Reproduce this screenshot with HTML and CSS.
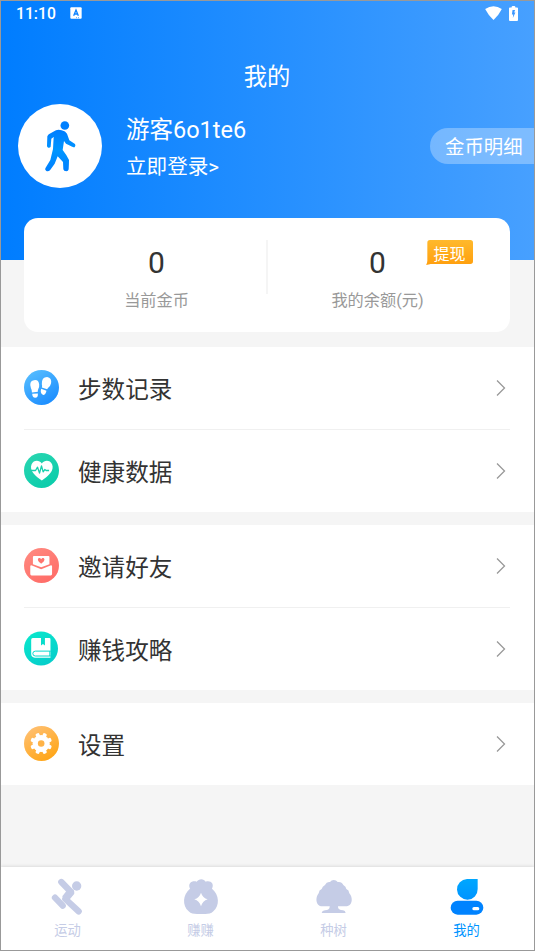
FILE: index.html
```html
<!DOCTYPE html>
<html lang="zh-CN">
<head>
<meta charset="UTF-8">
<meta name="viewport" content="width=device-width, initial-scale=1.0">
<title>我的</title>
<link rel="stylesheet" href="styles.css">
</head>
<body>

<div class="page">
  <header class="header">
    <div class="status-bar">
      <span class="time">11:10</span>
      <svg class="status-app" viewBox="0 0 36 36">
        <rect x="1" y="1" width="34" height="34" rx="3" fill="#fff"/>
        <path d="M11 26 L18 9 L25 26 M13.500 21 H22.500" fill="none" stroke="#0c82ff" stroke-width="4"/>
        <path d="M18 32 H28" stroke="#0c82ff" stroke-width="2" stroke-dasharray="3 3"/>
      </svg>
      <svg class="status-wifi" viewBox="0 0 50 42">
        <path d="M0 9 Q25 -7 50 9 Q40 29 25 42 Q10 29 0 9Z" fill="#fff"/>
      </svg>
      <svg class="status-battery" viewBox="0 0 28 46">
        <path d="M8 4 Q8 0 12 0 H16 Q20 0 20 4 H25 Q28 4 28 7 V43 Q28 46 25 46 H3 Q0 46 0 43 V7 Q0 4 3 4Z" fill="#fff"/>
        <path d="M11 12 H19 L16 20 H20 L12 37 L13 26 H9Z" fill="#3d98ff"/>
      </svg>
    </div>

    <h1 class="title">我的</h1>

    <div class="user">
      <svg class="avatar" viewBox="0 0 252 252">
        <defs>
          <linearGradient id="walkFill" x1="0" y1="0" x2="0" y2="1">
            <stop offset="0" stop-color="#007dff"/>
            <stop offset="0.500" stop-color="#0096ff"/>
            <stop offset="1" stop-color="#007fff"/>
          </linearGradient>
        </defs>
        <circle cx="126" cy="126" r="126" fill="#fff"/>
        <circle cx="140.500" cy="64.500" r="13" fill="#0080ff"/>
        <path d="M114 79 Q121 76 131 79 Q143 82 147 89 L154 109 L171 120 Q174 124 170 130 Q165 130 144 119 L138 111 L134 138 Q146 153 153 168 Q153 181 152 196 Q151 202 145 202 Q137 202 136 196 L135 174 L119 157 L110 179 L96 199 Q91 203 85 201 Q80 198 82 193 L97 168 L105 135 L107 99 L100 104 L98 128 Q96 132 91 131 Q87 130 87 126 L88 97 Q90 91 95 89Z" fill="url(#walkFill)"/>
      </svg>
      <div class="user-text">
        <div class="user-name">游客6o1te6</div>
        <div class="user-login">立即登录&gt;</div>
      </div>
      <div class="coin-detail">金币明细</div>
    </div>
  </header>

  <section class="wallet">
    <div class="wallet-item">
      <div class="wallet-num">0</div>
      <div class="wallet-label">当前金币</div>
    </div>
    <div class="wallet-line"></div>
    <div class="wallet-item">
      <div class="wallet-num">0</div>
      <div class="wallet-label">我的余额(元)</div>
    </div>
    <div class="withdraw">
      <svg class="withdraw-bg" viewBox="0 0 141 75">
        <defs>
          <linearGradient id="withdrawFill" x1="0" y1="0" x2="0" y2="1">
            <stop offset="0" stop-color="#ffb92c"/>
            <stop offset="1" stop-color="#ff9f0e"/>
          </linearGradient>
        </defs>
        <path d="M4 8 Q4 0 12 0 H133 Q141 0 141 8 V64 Q141 72 133 72 H14 L0 75 Q4 69 4 62Z" fill="url(#withdrawFill)"/>
      </svg>
      <span class="withdraw-text">提现</span>
    </div>
  </section>

  <main class="menu">
    <div class="group">
      <div class="row">
        <svg class="row-icon" viewBox="0 0 106 106">
          <defs>
            <linearGradient id="stepFill" x1="0.200" y1="0" x2="0.800" y2="1">
              <stop offset="0" stop-color="#56bdff"/>
              <stop offset="1" stop-color="#198bff"/>
            </linearGradient>
          </defs>
          <circle cx="53" cy="53" r="53" fill="url(#stepFill)"/>
          <g fill="#fff">
            <path d="M30 31 Q44 28 46 44 Q47 52 43 58 Q41 63 42 66 L24 68 Q25 62 21 55 Q14 34 30 31Z"/>
            <path d="M25 72 L42 71 Q43 84 34 84 Q25 84 25 72Z"/>
            <path d="M70 21 Q85 24 82 40 Q80 49 74 53 Q71 56 70 58 L54 53 Q56 49 54 43 Q53 21 70 21Z"/>
            <path d="M52 57 L68 63 Q65 78 57 75 Q48 71 52 57Z"/>
          </g>
        </svg>
        <span class="row-text">步数记录</span>
        <svg class="arrow" viewBox="0 0 10 18"><path d="M1 1.500 L8.500 9 L1 16.500"/></svg>
      </div>
      <div class="row">
        <svg class="row-icon" viewBox="0 0 106 106">
          <defs>
            <linearGradient id="healthFill" x1="0.200" y1="0" x2="0.800" y2="1">
              <stop offset="0" stop-color="#28d5b0"/>
              <stop offset="1" stop-color="#09ccab"/>
            </linearGradient>
          </defs>
          <circle cx="53" cy="53" r="53" fill="url(#healthFill)"/>
          <path d="M54 32 C62 20 79 21 85 34 C93 53 74 70 54 83 C34 70 15 53 23 34 C29 21 46 20 54 32Z" fill="#fff"/>
          <path d="M20 53 H35 L41 43 L47 61 L53 39 L58 57 L63 50 L67 53 H76" fill="none" stroke="#17d0ad" stroke-width="4" stroke-linejoin="round"/>
        </svg>
        <span class="row-text">健康数据</span>
        <svg class="arrow" viewBox="0 0 10 18"><path d="M1 1.500 L8.500 9 L1 16.500"/></svg>
      </div>
    </div>

    <div class="group">
      <div class="row">
        <svg class="row-icon" viewBox="0 0 106 106">
          <defs>
            <linearGradient id="inviteFill" x1="0.200" y1="0" x2="0.800" y2="1">
              <stop offset="0" stop-color="#ff8980"/>
              <stop offset="1" stop-color="#ff6b66"/>
            </linearGradient>
          </defs>
          <circle cx="53" cy="53" r="53" fill="url(#inviteFill)"/>
          <path d="M27 27 Q27 24 30 24 H74 Q77 24 77 27 V49 L52 58 L27 49Z" fill="#fff"/>
          <path d="M52 34 C55 28 62 29 62 35 C62 41 56 44 52 48 C48 44 42 41 42 35 C42 29 49 28 52 34Z" fill="#ff746d"/>
          <path d="M19 55 Q20 51 24 53 L52 64 L80 53 Q84 51 85 55 V79 Q85 83 81 83 H23 Q19 83 19 79Z" fill="#fff"/>
        </svg>
        <span class="row-text">邀请好友</span>
        <svg class="arrow" viewBox="0 0 10 18"><path d="M1 1.500 L8.500 9 L1 16.500"/></svg>
      </div>
      <div class="row">
        <svg class="row-icon row-icon-book" viewBox="0 0 104 106">
          <defs>
            <linearGradient id="bookFill" x1="0.200" y1="0" x2="0.800" y2="1">
              <stop offset="0" stop-color="#09e7cc"/>
              <stop offset="1" stop-color="#05cccb"/>
            </linearGradient>
          </defs>
          <circle cx="52" cy="53" r="52" fill="url(#bookFill)"/>
          <path d="M27 21 H52 V44 L58 39 L64 44 V21 H77 Q81 21 81 25 V81 H33 Q22 80 22 70 V26 Q22 21 27 21Z" fill="#fff"/>
          <path d="M82 61 H35 Q27 61 27 68.500 Q27 76 35 76 H82" fill="none" stroke="#06d8cc" stroke-width="3"/>
          <path d="M79 61 V76" stroke="#06d8cc" stroke-width="3"/>
        </svg>
        <span class="row-text">赚钱攻略</span>
        <svg class="arrow" viewBox="0 0 10 18"><path d="M1 1.500 L8.500 9 L1 16.500"/></svg>
      </div>
    </div>

    <div class="group">
      <div class="row">
        <svg class="row-icon" viewBox="0 0 106 106">
          <defs>
            <linearGradient id="settingFill" x1="0.200" y1="0" x2="0.800" y2="1">
              <stop offset="0" stop-color="#ffc073"/>
              <stop offset="1" stop-color="#ffa411"/>
            </linearGradient>
          </defs>
          <circle cx="53" cy="53" r="53" fill="url(#settingFill)"/>
          <g fill="#fff" transform="translate(52 53)">
            <circle r="26"/>
            <rect x="-6" y="-33" width="12" height="66" rx="4" transform="rotate(22.500)"/>
            <rect x="-6" y="-33" width="12" height="66" rx="4" transform="rotate(67.500)"/>
            <rect x="-6" y="-33" width="12" height="66" rx="4" transform="rotate(112.500)"/>
            <rect x="-6" y="-33" width="12" height="66" rx="4" transform="rotate(157.500)"/>
            <circle r="10" fill="#ffb347"/>
          </g>
        </svg>
        <span class="row-text">设置</span>
        <svg class="arrow" viewBox="0 0 10 18"><path d="M1 1.500 L8.500 9 L1 16.500"/></svg>
      </div>
    </div>
  </main>

  <nav class="tabs">
    <div class="tab">
      <svg class="tab-icon" viewBox="2 0 114 114">
        <g fill="none" stroke="#c5cce6" stroke-width="19" stroke-linecap="round" stroke-linejoin="round">
          <path d="M39 15 L68 45 L51 66 L91 103"/>
          <path d="M20 62 L43 86"/>
        </g>
        <circle cx="85" cy="27" r="14" fill="#c5cce6"/>
        <path d="M56 40 L76 40 L78 50 L62 70 L44 64 L42 58Z" fill="#c5cce6"/>
      </svg>
      <span>运动</span>
    </div>
    <div class="tab">
      <svg class="tab-icon" viewBox="0 -2 114 114">
        <path d="M24 33 C16 16 31 8 44 12 C50 2 66 2 71 12 C85 7 98 17 90 33 C112 51 114 84 94 101 C87 108 80 109 70 109 H45 C34 109 27 108 20 101 C0 83 2 51 24 33Z" fill="#c5cce6"/>
        <path d="M57 45 Q62 61 77 65 Q62 70 57 86 Q52 70 37 65 Q52 61 57 45Z" fill="#fff"/>
      </svg>
      <span>赚赚</span>
    </div>
    <div class="tab">
      <svg class="tab-icon" viewBox="0 -2 114 114">
        <path d="M56 7 Q64 7 68 13 Q80 11 85 22 Q93 26 94 34 Q102 37 103 47 C116 62 111 86 92 86 H69 Q68 97 84 98 Q91 99 92 106 H20 Q21 99 30 98 Q45 97 44 86 H23 C3 86 -1 62 11 47 Q12 37 20 34 Q22 26 30 22 Q35 11 45 13 Q49 7 56 7Z" fill="#c5cce6"/>
      </svg>
      <span>种树</span>
    </div>
    <div class="tab tab-active">
      <svg class="tab-icon" viewBox="0 -3 114 114">
        <defs>
          <linearGradient id="headFill" x1="0" y1="0" x2="0" y2="1">
            <stop offset="0" stop-color="#00a7ff"/>
            <stop offset="1" stop-color="#0094ff"/>
          </linearGradient>
        </defs>
        <path d="M57 3 H89 V33 A31 31 0 1 1 57 3Z" fill="url(#headFill)"/>
        <rect x="8" y="68" width="98" height="42" rx="21" fill="#0083ff"/>
        <rect x="73" y="87" width="21" height="10" rx="5" fill="#fff"/>
      </svg>
      <span>我的</span>
    </div>
  </nav>
</div>

</body>
</html>
```

FILE: styles.css
```css
* {
    box-sizing: border-box;
}

body {
    margin: 0;
    font-family: Roboto, "Noto Sans CJK SC", sans-serif;
    color: #333;
}

.page {
    display: flex;
    flex-direction: column;
    height: 951px;
    border: 1px solid #999;
    background-color: #f5f5f5;
    overflow: hidden;
}

/* header */
.header {
    flex: none;
    height: 259px;
    background: linear-gradient(to right, #007dff, #47a0ff);
    color: #fff;
}

.status-bar {
    display: flex;
    align-items: center;
    height: 24px;
    padding: 0 16px 0 15px;
}

.time {
    font-size: 15.7px;
    font-weight: 500;
}

.status-app {
    width: 12px;
    height: 12px;
    margin-left: 14px;
}

.status-wifi {
    width: 17px;
    height: 14px;
    margin-left: auto;
    margin-right: 7px;
}

.status-battery {
    width: 9px;
    height: 15px;
}

.title {
    margin: 34px 0 0;
    padding-right: 1px;
    font-size: 23.3px;
    font-weight: 400;
    line-height: 36px;
    text-align: center;
}

.user {
    display: flex;
    align-items: center;
    height: 84px;
    margin-top: 9px;
    padding-left: 17px;
}

.avatar {
    width: 84px;
    height: 84px;
}

.user-text {
    margin-left: 24px;
    padding-top: 4px;
}

.user-name {
    font-size: 23.5px;
    line-height: 38px;
}

.user-login {
    font-size: 20.6px;
    line-height: 36px;
}

.coin-detail {
    width: 104px;
    height: 36px;
    margin-left: auto;
    padding-left: 15px;
    border-radius: 18px 0 0 18px;
    background-color: rgba(255, 255, 255, 0.3);
    font-size: 19.4px;
    line-height: 39px;
}

/* wallet card overlaps the header */
.wallet {
    position: relative;
    flex: none;
    display: flex;
    height: 114px;
    margin: -42px 24px 15px 23px;
    padding: 22px 23px 0;
    border-radius: 14px;
    background-color: #fff;
}

.wallet-item {
    flex: 1;
    text-align: center;
}

.wallet-num {
    font-size: 30px;
    line-height: 45px;
}

.wallet-label {
    color: #999;
    font-size: 16.2px;
    line-height: 32px;
}

.wallet-line {
    width: 2px;
    height: 54px;
    background-color: #f5f5f5;
}

.withdraw {
    position: absolute;
    top: 22px;
    right: 37px;
    width: 47px;
    height: 25px;
    color: #fff;
    font-size: 16px;
    line-height: 29px;
    text-align: center;
}

.withdraw-bg {
    position: absolute;
    top: 0;
    left: 0;
    width: 47px;
    height: 25px;
}

.withdraw-text {
    position: relative;
}

/* menu list */
.menu {
    flex: 1;
    display: flex;
    flex-direction: column;
    gap: 13px;
}

.group {
    padding: 0 24px 0 23px;
    background-color: #fff;
}

.row {
    display: flex;
    align-items: center;
    height: 82px;
}

.row + .row {
    height: 83px;
    border-top: 1px solid #f0f0f0;
}

.row-icon {
    width: 35px;
    height: 35px;
    margin-bottom: 1px;
}

.row-icon-book {
    width: 34px;
    margin-right: 1px;
}

.row-text {
    margin-left: 19px;
    padding-top: 3px;
    font-size: 23.6px;
    line-height: 36px;
}

.arrow {
    width: 10px;
    height: 18px;
    margin-left: auto;
    margin-right: 4px;
    fill: none;
    stroke: #999;
    stroke-width: 1.3;
}

/* bottom tabs */
.tabs {
    flex: none;
    display: flex;
    height: 83px;
    padding-right: 1px;
    background-color: #fff;
    box-shadow: 0 -1px 3px rgba(0, 0, 0, 0.1);
}

.tab {
    flex: 1;
    display: flex;
    flex-direction: column;
    align-items: center;
    padding-top: 10px;
    color: #c5cce6;
    font-size: 13.3px;
    line-height: 20px;
}

.tab-icon {
    width: 38px;
    height: 38px;
    margin-bottom: 6px;
}

.tab-active {
    color: #0094ff;
}
```
